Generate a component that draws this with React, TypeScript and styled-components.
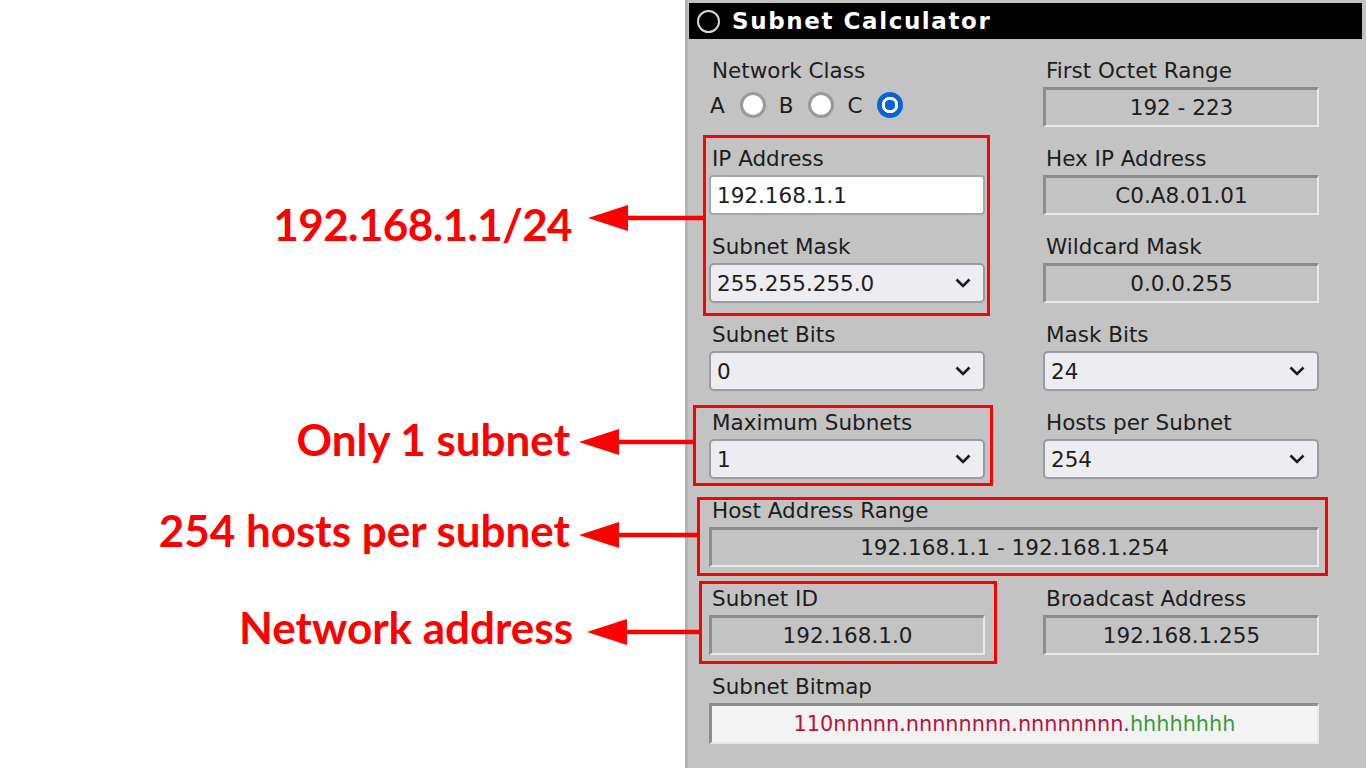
import styled, { createGlobalStyle } from "styled-components";

const GlobalStyle = createGlobalStyle`
    html, body {
        margin: 0;
        padding: 0;
        background: #ffffff;
    }
    body {
        width: 1366px;
        height: 768px;
        overflow: hidden;
    }
    * {
        box-sizing: border-box;
    }
`;

const callouts = [
    { text: "192.168.1.1/24", gap: 0, shift: 12, space: 16, length: 115, overhang: 18, tracking: -0.6 },
    { text: "Only 1 subnet", gap: 164, shift: -6, space: 9, length: 114, overhang: 8, tracking: 0 },
    { text: "254 hosts per subnet", gap: 33, shift: -10, space: 9, length: 118, overhang: 12, tracking: 0 },
    { text: "Network address", gap: 37, shift: -11, space: 14, length: 112, overhang: 14, tracking: 0 }
];

const Page = styled.div`
    display: flex;
    width: 1366px;
    height: 768px;
`;

const Annotations = styled.div`
    position: relative;
    z-index: 1;
    display: flex;
    flex-direction: column;
    flex: 0 0 685px;
    padding-top: 188px;
`;

const Callout = styled.div<{ $gap: number; $overhang: number }>`
    display: flex;
    align-items: center;
    justify-content: flex-end;
    height: 60px;
    margin-top: ${(p) => p.$gap}px;
    margin-right: -${(p) => p.$overhang}px;
`;

const CalloutText = styled.span<{ $space: number; $shift: number; $tracking: number }>`
    margin-right: ${(p) => p.$space}px;
    margin-top: ${(p) => p.$shift}px;
    font-family: Lato, "Open Sans", sans-serif;
    font-weight: 700;
    font-size: 44px;
    line-height: 52px;
    letter-spacing: ${(p) => p.$tracking}px;
    color: #ff0000;
    white-space: nowrap;
`;

const ArrowSvg = styled.svg`
    flex-shrink: 0;
    display: block;
`;

const Panel = styled.div`
    flex: 1;
    display: flex;
    flex-direction: column;
    padding: 3px 4px 0 1px;
    background: #c3c3c3;
    border-left: 3px solid #b4b4b4;
    font-family: "DejaVu Sans", Verdana, sans-serif;
    color: #1d1d1d;
`;

const TitleBar = styled.div`
    display: flex;
    align-items: center;
    gap: 12px;
    height: 36px;
    padding-left: 8px;
    background: #000000;
`;

const TitleDot = styled.span`
    width: 23px;
    height: 23px;
    border-radius: 50%;
    border: 2px solid #d6d6d6;
`;

const Title = styled.h1`
    margin: 0;
    font-family: "DejaVu Sans", sans-serif;
    font-weight: 700;
    font-size: 23px;
    letter-spacing: 1.6px;
    color: #ffffff;
`;

const Form = styled.div`
    display: grid;
    grid-template-columns: 276px 276px;
    column-gap: 58px;
    row-gap: 19px;
    padding: 19px 0 0 20px;
`;

const Field = styled.div<{ $wide?: boolean }>`
    display: flex;
    flex-direction: column;
    grid-column: ${(p) => (p.$wide ? "1 / -1" : "auto")};
`;

const Highlight = styled.div<{
    $out: [number, number, number, number];
    $rows?: number;
    $wide?: boolean;
}>`
    position: relative;
    display: flex;
    flex-direction: column;
    gap: 19px;
    grid-row: span ${(p) => p.$rows ?? 1};
    grid-column: ${(p) => (p.$wide ? "1 / -1" : "auto")};

    &::after {
        content: "";
        position: absolute;
        top: -${(p) => p.$out[0]}px;
        right: -${(p) => p.$out[1]}px;
        bottom: -${(p) => p.$out[2]}px;
        left: -${(p) => p.$out[3]}px;
        border: 3px solid #ff0000;
        pointer-events: none;
    }
`;

const Label = styled.div`
    height: 26px;
    line-height: 26px;
    margin-bottom: 3px;
    padding-left: 3px;
    font-size: 21.5px;
    white-space: nowrap;
`;

const Output = styled.div<{ $light?: boolean }>`
    display: flex;
    align-items: center;
    justify-content: center;
    height: ${(p) => (p.$light ? 41 : 40)}px;
    border-style: solid;
    border-width: 3px 2px 2px 3px;
    border-color: #8e8e8e #e9e9e9 #e9e9e9 #8e8e8e;
    background: ${(p) => (p.$light ? "#f3f3f3" : "#c3c3c3")};
    font-size: ${(p) => (p.$light ? 20.8 : 21.5)}px;
    white-space: nowrap;
`;

const TextInput = styled.input`
    height: 40px;
    width: 100%;
    margin: 0;
    padding: 0 6px;
    border: 2px solid #a7a7a7;
    border-radius: 4px;
    background: #ffffff;
    font-family: "DejaVu Sans", Verdana, sans-serif;
    font-size: 21.5px;
    color: #1d1d1d;
    outline: none;
`;

const Select = styled.div`
    display: flex;
    align-items: center;
    justify-content: space-between;
    height: 40px;
    padding: 0 12px 0 6px;
    border: 2px solid #9a9aa3;
    border-radius: 5px;
    background: #ececf1;
    font-size: 21.5px;
`;

const RadioRow = styled.div`
    display: flex;
    align-items: center;
    gap: 13px;
    height: 36px;
    padding-left: 1px;
    font-size: 21.5px;
`;

const RadioOption = styled.label`
    display: flex;
    align-items: center;
    gap: 15px;
`;

const Radio = styled.span<{ $checked?: boolean }>`
    width: 26px;
    height: 26px;
    border-radius: 50%;
    background: ${(p) =>
        p.$checked
            ? "radial-gradient(circle, #0b63d8 0 5px, #ffffff 5.5px 8px, #0b63d8 8.5px)"
            : "#ffffff"};
    border: ${(p) => (p.$checked ? "none" : "3px solid #999999")};
`;

const NetBits = styled.span`
    color: #b8123c;
`;

const HostBits = styled.span`
    color: #3b9a3b;
`;

const Arrow = ({ length }: { length: number }) => (
    <ArrowSvg width={length} height={28} viewBox={`0 0 ${length} 28`}>
        <polygon points="0,14 40,1 40,27" fill="#ff0000" />
        <rect x={38} y={11.75} width={length - 38} height={4.5} fill="#ff0000" />
    </ArrowSvg>
);

const Chevron = () => (
    <svg width="16" height="10" viewBox="0 0 16 10">
        <path d="M1.5 1.5 L8 8 L14.5 1.5" fill="none" stroke="#1b1b1b" strokeWidth="2.6" />
    </svg>
);

const OutputField = ({ label, value, wide }: { label: string; value: string; wide?: boolean }) => (
    <Field $wide={wide}>
        <Label>{label}</Label>
        <Output>{value}</Output>
    </Field>
);

const SelectField = ({ label, value }: { label: string; value: string }) => (
    <Field>
        <Label>{label}</Label>
        <Select>
            <span>{value}</span>
            <Chevron />
        </Select>
    </Field>
);

const App = () => {
    return (
        <Page>
            <GlobalStyle />
            <Annotations>
                {callouts.map((c, idx) => (
                    <Callout key={idx} $gap={c.gap} $overhang={c.overhang}>
                        <CalloutText $space={c.space} $shift={c.shift} $tracking={c.tracking}>
                            {c.text}
                        </CalloutText>
                        <Arrow length={c.length} />
                    </Callout>
                ))}
            </Annotations>

            <Panel>
                <TitleBar>
                    <TitleDot />
                    <Title>Subnet Calculator</Title>
                </TitleBar>

                <Form>
                    <Field>
                        <Label>Network Class</Label>
                        <RadioRow>
                            <RadioOption>
                                A <Radio />
                            </RadioOption>
                            <RadioOption>
                                B <Radio />
                            </RadioOption>
                            <RadioOption>
                                C <Radio $checked />
                            </RadioOption>
                        </RadioRow>
                    </Field>
                    <OutputField label="First Octet Range" value="192 - 223" />

                    <Highlight $out={[11, 5, 13, 6]} $rows={2}>
                        <Field>
                            <Label>IP Address</Label>
                            <TextInput defaultValue="192.168.1.1" />
                        </Field>
                        <SelectField label="Subnet Mask" value="255.255.255.0" />
                    </Highlight>
                    <OutputField label="Hex IP Address" value="C0.A8.01.01" />
                    <OutputField label="Wildcard Mask" value="0.0.0.255" />

                    <SelectField label="Subnet Bits" value="0" />
                    <SelectField label="Mask Bits" value="24" />

                    <Highlight $out={[5, 8, 7, 16]}>
                        <SelectField label="Maximum Subnets" value="1" />
                    </Highlight>
                    <SelectField label="Hosts per Subnet" value="254" />

                    <Highlight $out={[1, 9, 9, 12]} $wide>
                        <OutputField label="Host Address Range" value="192.168.1.1 - 192.168.1.254" />
                    </Highlight>

                    <Highlight $out={[5, 12, 9, 10]}>
                        <OutputField label="Subnet ID" value="192.168.1.0" />
                    </Highlight>
                    <OutputField label="Broadcast Address" value="192.168.1.255" />

                    <Field $wide>
                        <Label>Subnet Bitmap</Label>
                        <Output $light>
                            <NetBits>110nnnnn.nnnnnnnn.nnnnnnnn.</NetBits>
                            <HostBits>hhhhhhhh</HostBits>
                        </Output>
                    </Field>
                </Form>
            </Panel>
        </Page>
    );
};

export default App;
